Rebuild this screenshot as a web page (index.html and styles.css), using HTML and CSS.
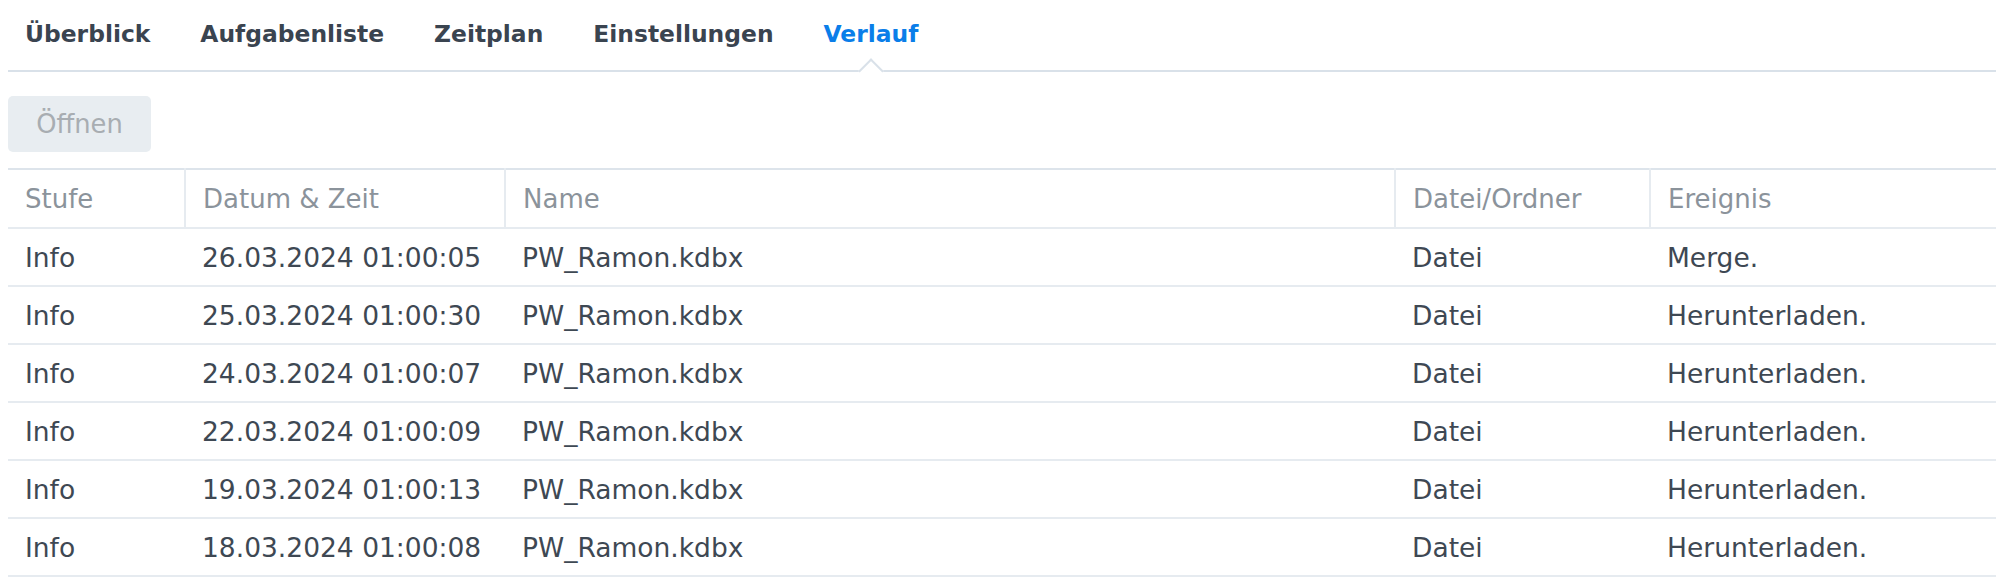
FILE: index.html
```html
<!DOCTYPE html>
<html lang="de">
<head>
<meta charset="utf-8">
<title>Verlauf</title>
<link rel="stylesheet" href="styles.css">
</head>
<body>
<div class="page">
  <nav class="tabs">
    <span class="tab">Überblick</span>
    <span class="tab">Aufgabenliste</span>
    <span class="tab">Zeitplan</span>
    <span class="tab">Einstellungen</span>
    <span class="tab active">Verlauf</span>
  </nav>
  <div class="toolbar">
    <button class="btn" disabled>Öffnen</button>
  </div>
  <table class="grid">
    <colgroup>
      <col class="c1"><col class="c2"><col class="c3"><col class="c4"><col class="c5">
    </colgroup>
    <thead>
      <tr><th>Stufe</th><th>Datum &amp; Zeit</th><th>Name</th><th>Datei/Ordner</th><th>Ereignis</th></tr>
    </thead>
    <tbody>
      <tr><td>Info</td><td>26.03.2024 01:00:05</td><td>PW_Ramon.kdbx</td><td>Datei</td><td>Merge.</td></tr>
      <tr><td>Info</td><td>25.03.2024 01:00:30</td><td>PW_Ramon.kdbx</td><td>Datei</td><td>Herunterladen.</td></tr>
      <tr><td>Info</td><td>24.03.2024 01:00:07</td><td>PW_Ramon.kdbx</td><td>Datei</td><td>Herunterladen.</td></tr>
      <tr><td>Info</td><td>22.03.2024 01:00:09</td><td>PW_Ramon.kdbx</td><td>Datei</td><td>Herunterladen.</td></tr>
      <tr><td>Info</td><td>19.03.2024 01:00:13</td><td>PW_Ramon.kdbx</td><td>Datei</td><td>Herunterladen.</td></tr>
      <tr><td>Info</td><td>18.03.2024 01:00:08</td><td>PW_Ramon.kdbx</td><td>Datei</td><td>Herunterladen.</td></tr>
    </tbody>
  </table>
</div>
</body>
</html>
```
FILE: styles.css
```css
html, body {
  margin: 0;
  padding: 0;
  background: #ffffff;
}
body {
  font-family: "DejaVu Sans", Verdana, sans-serif;
  color: #3e4853;
  overflow: hidden;
}
.page {
  padding-left: 8px;
}
.tabs {
  display: flex;
  gap: 50px;
  padding-left: 17px;
  border-bottom: 2px solid #d9e1e9;
  box-sizing: border-box;
  height: 72px;
  align-items: stretch;
}
.tab {
  position: relative;
  font-weight: bold;
  font-size: 23.4px;
  line-height: 28px;
  padding-top: 20px;
  color: #3a4450;
  white-space: nowrap;
}
.tab.active {
  color: #0a7ee9;
}
.tab.active::after {
  content: "";
  position: absolute;
  left: 50%;
  bottom: -10px;
  width: 18px;
  height: 18px;
  margin-left: -9px;
  background: #ffffff;
  border-left: 2px solid #d9e1e9;
  border-top: 2px solid #d9e1e9;
  transform: rotate(45deg);
  box-sizing: border-box;
}
.toolbar {
  padding-top: 24px;
  height: 96px;
  box-sizing: border-box;
}
.btn {
  width: 143px;
  height: 56px;
  border: 0;
  border-radius: 5px;
  background: #e8edf1;
  color: #a8adb2;
  font-family: "DejaVu Sans", Verdana, sans-serif;
  font-size: 25.8px;
  padding: 0;
  margin: 0;
}
.grid {
  width: 1988px;
  border-collapse: collapse;
  table-layout: fixed;
  border-top: 2px solid #dde4eb;
}
.c1 { width: 177px; }
.c2 { width: 320px; }
.c3 { width: 890px; }
.c4 { width: 255px; }
.c5 { width: 346px; }
.grid th {
  font-weight: normal;
  color: #8b939b;
  text-align: left;
  font-size: 26px;
  height: 57px;
  padding: 0 0 0 17px;
  border-bottom: 2px solid #e6ebf0;
  border-left: 2px solid #e6ebf0;
  white-space: nowrap;
}
.grid th:first-child {
  border-left: 0;
}
.grid td {
  font-size: 26.5px;
  height: 56px;
  padding: 0 0 0 17px;
  border-bottom: 2px solid #e6ebf0;
  white-space: nowrap;
  color: #3e4853;
}
```
